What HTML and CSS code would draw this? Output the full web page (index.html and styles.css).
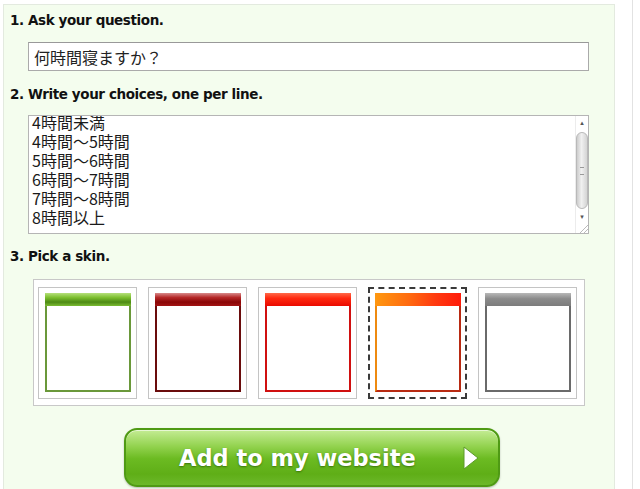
FILE: index.html
```html
<!DOCTYPE html>
<html lang="ja">
  <head>
    <meta charset="UTF-8" />
    <title>Poll builder</title>
    <link rel="stylesheet" href="styles.css">
  </head>
  <body>
    <div class="page">
      <div class="panel">
        <h3 class="step">1. Ask your question.</h3>
        <input class="question" type="text" value="何時間寝ますか？" />

        <h3 class="step">2. Write your choices, one per line.</h3>
        <div class="choices-box">
          <textarea id="choices" class="choices">4時間未満
4時間〜5時間
5時間〜6時間
6時間〜7時間
7時間〜8時間
8時間以上</textarea>
          <div class="scrollbar">
            <div class="sb-btn">&#9652;</div>
            <div class="sb-track"><div class="sb-thumb"><span class="grip"></span></div></div>
            <div class="sb-btn">&#9662;</div>
            <div class="sb-corner"></div>
          </div>
        </div>

        <h3 class="step">3. Pick a skin.</h3>
        <div class="skins">
          <div class="skin"><div class="preview green"><div class="bar"></div></div></div>
          <div class="skin"><div class="preview maroon"><div class="bar"></div></div></div>
          <div class="skin"><div class="preview red"><div class="bar"></div></div></div>
          <div class="skin selected"><div class="preview orange"><div class="bar"></div></div></div>
          <div class="skin"><div class="preview grey"><div class="bar"></div></div></div>
        </div>

        <div class="actions">
          <button class="add-btn">
            <span>Add to my website</span>
            <svg class="arrow" width="18" height="26" viewBox="0 0 18 26">
              <path d="M2 2 L16 13 L2 24 Z" fill="#fff" stroke="#5c9a2a" stroke-width="1" stroke-linejoin="round" />
            </svg>
          </button>
        </div>
      </div>
    </div>

    <script>
      // textarea in the shot is scrolled to the bottom
      const box = document.getElementById("choices");
      box.scrollTop = box.scrollHeight;
    </script>
  </body>
</html>
```

FILE: styles.css
```css
body {
  margin: 0;
  padding: 0;
  background: #fff;
  font-family: "DejaVu Sans", Verdana, sans-serif;
  color: #111;
  overflow: hidden;
}

.page {
  width: 633px;
  height: 489px;
  padding: 4px 0 0 3px;
  box-sizing: border-box;
  border-right: 1px solid #e2e2e2;
}

.panel {
  width: 612px;
  height: 520px;
  box-sizing: border-box;
  background: #f4fdee;
  border: 1px solid #e3eadf;
  padding: 7px 0 0 6px;
}

.step {
  margin: 0;
  font-size: 13.5px;
  line-height: 16px;
  font-weight: bold;
  letter-spacing: -0.4px;
}

.question {
  display: block;
  width: 561px;
  height: 29px;
  box-sizing: border-box;
  margin: 14px 0 15px 18px;
  padding: 0 5px;
  border: 1px solid #aaa;
  border-top-color: #999;
  background: #fff;
  font-family: "Noto Sans CJK JP", sans-serif;
  font-size: 16px;
  color: #222;
  outline: none;
}

/* textarea with a drawn scrollbar */
.choices-box {
  display: flex;
  width: 561px;
  height: 119px;
  box-sizing: border-box;
  margin: 13px 0 14px 18px;
  border: 1px solid #b5b5b5;
  background: #fff;
}

.choices {
  flex: 1;
  height: 100%;
  box-sizing: border-box;
  margin: 0;
  padding: 2px 3px 6px;
  border: none;
  background: #fff;
  font-family: "Noto Sans CJK JP", sans-serif;
  font-size: 16px;
  line-height: 19px;
  color: #1a1a1a;
  resize: none;
  overflow: hidden;
  outline: none;
}

.scrollbar {
  display: flex;
  flex-direction: column;
  width: 12px;
  border-left: 1px solid #ececec;
  background: #fff;
}

.sb-btn {
  height: 15px;
  font-size: 7px;
  line-height: 15px;
  text-align: center;
  color: #555;
}

.sb-track {
  flex: 1;
  padding: 1px 0;
}

.sb-thumb {
  display: flex;
  align-items: center;
  justify-content: center;
  height: 100%;
  box-sizing: border-box;
  border: 1px solid #b9b9b9;
  border-radius: 6px;
  background: linear-gradient(to right, #cdcdcd, #f0f0f0 45%, #d4d4d4);
}

.grip {
  width: 4px;
  height: 6px;
  border-top: 1px solid #999;
  border-bottom: 1px solid #999;
}

.sb-corner {
  height: 8px;
  background: linear-gradient(135deg, transparent 55%, #bbb 56%, #bbb 62%, transparent 63%, transparent 75%, #bbb 76%, #bbb 82%, transparent 83%);
}

/* skin picker */
.skins {
  display: flex;
  gap: 11px;
  width: 552px;
  box-sizing: border-box;
  margin: 15px 0 0 23px;
  padding: 7px 4px 6px 4px;
  background: #fff;
  border: 1px solid #c8c8c8;
}

.skin {
  width: 99px;
  height: 112px;
  box-sizing: border-box;
  padding: 5px 5px 6px 6px;
  border: 1px solid #c4c4c4;
  background: #fff;
}

.skin.selected {
  border: 2px dashed #3a3a3a;
  padding: 4px 4px 5px 5px;
}

.preview {
  width: 86px;
  height: 99px;
  box-sizing: border-box;
  border: 2px solid #6a983a;
  border-top: none;
  background: #fff;
}

.bar {
  height: 13px;
  margin: 0 -2px;
}

.green .bar {
  background: linear-gradient(#b6e07c, #7cbf2e 35%, #4d8a14 70%, #7bbb33);
}

.maroon {
  border-color: #6a0c0c;
}

.maroon .bar {
  background: linear-gradient(#d88a8a, #b42626 35%, #8a0606 70%, #a31414);
}

.red {
  border-color: #d01010;
}

.red .bar {
  background: linear-gradient(#ff6a4a, #ff2a10 40%, #ea0a00);
}

.orange {
  border-color: #b82a12;
  border-left-color: #ee8a10;
}

.orange .bar {
  background: linear-gradient(100deg, #ff9a10, #ff6a10 40%, #ff3a10 70%, #ff1a0a);
}

.grey {
  border-color: #6a6a6a;
}

.grey .bar {
  background: linear-gradient(#b8b8b8, #8a8a8a 45%, #7c7c7c);
}

/* big green button */
.actions {
  display: flex;
  justify-content: center;
  margin-top: 22px;
}

.add-btn {
  display: flex;
  align-items: center;
  justify-content: space-between;
  width: 376px;
  height: 59px;
  box-sizing: border-box;
  padding: 0 18px 0 53px;
  border: 2px solid #4f9a14;
  border-radius: 13px;
  background: linear-gradient(#c4ec94, #92d24e 30%, #6cbb22 52%, #5fae17 80%, #6cb82a);
  box-shadow: 0 1px 2px rgba(0, 0, 0, 0.25), inset 0 1px 0 rgba(255, 255, 255, 0.6);
  color: #fff;
  font-family: "DejaVu Sans", Verdana, sans-serif;
  font-size: 22.5px;
  font-weight: bold;
  text-shadow: 0 1px 2px rgba(40, 90, 0, 0.7);
  cursor: pointer;
}
```
